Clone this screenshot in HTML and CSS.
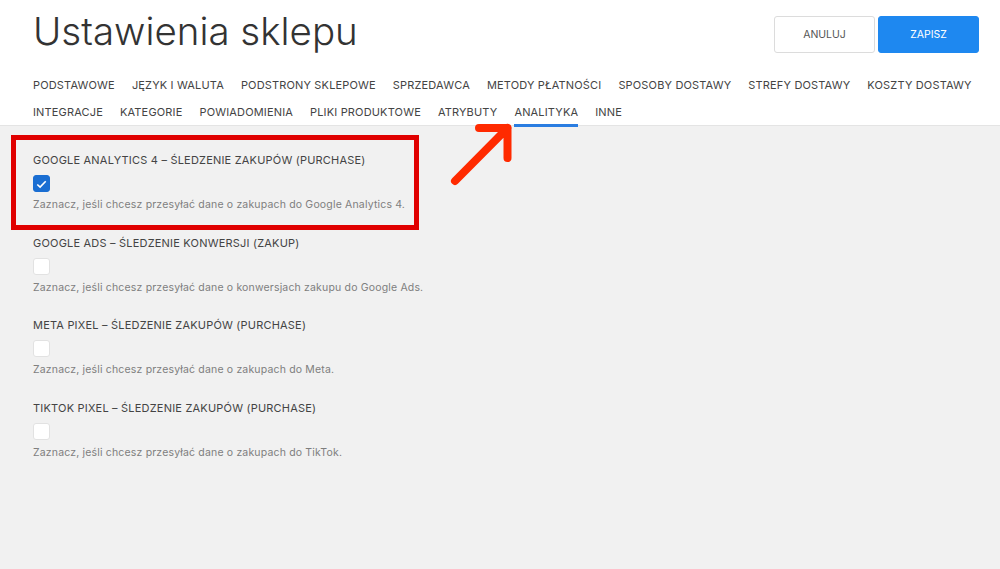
FILE: index.html
```html
<!DOCTYPE html>
<html lang="pl">
<head>
<meta charset="utf-8">
<title>Ustawienia sklepu</title>
<link rel="stylesheet" href="styles.css">
</head>
<body>
<header class="header">
  <div class="top">
    <h1 class="title">Ustawienia sklepu</h1>
    <div class="actions">
      <button class="btn btn-cancel">ANULUJ</button>
      <button class="btn btn-save">ZAPISZ</button>
    </div>
  </div>
  <nav class="tabs">
    <a class="tab">PODSTAWOWE</a>
    <a class="tab">JĘZYK I WALUTA</a>
    <a class="tab">PODSTRONY SKLEPOWE</a>
    <a class="tab">SPRZEDAWCA</a>
    <a class="tab">METODY PŁATNOŚCI</a>
    <a class="tab">SPOSOBY DOSTAWY</a>
    <a class="tab">STREFY DOSTAWY</a>
    <a class="tab">KOSZTY DOSTAWY</a>
    <a class="tab">INTEGRACJE</a>
    <a class="tab">KATEGORIE</a>
    <a class="tab">POWIADOMIENIA</a>
    <a class="tab">PLIKI PRODUKTOWE</a>
    <a class="tab">ATRYBUTY</a>
    <a class="tab active">ANALITYKA</a>
    <a class="tab">INNE</a>
  </nav>
</header>
<main class="content">
  <section class="field">
    <div class="label">GOOGLE ANALYTICS 4 – ŚLEDZENIE ZAKUPÓW (PURCHASE)</div>
    <span class="check checked">
      <svg viewBox="0 0 16 16" width="16" height="16"><path d="M3.5 8.5l3 2.8 6-6.3" fill="none" stroke="#fff" stroke-width="1.7"/></svg>
    </span>
    <p class="hint">Zaznacz, jeśli chcesz przesyłać dane o zakupach do Google Analytics 4.</p>
  </section>
  <section class="field">
    <div class="label">GOOGLE ADS – ŚLEDZENIE KONWERSJI (ZAKUP)</div>
    <span class="check"></span>
    <p class="hint">Zaznacz, jeśli chcesz przesyłać dane o konwersjach zakupu do Google Ads.</p>
  </section>
  <section class="field">
    <div class="label">META PIXEL – ŚLEDZENIE ZAKUPÓW (PURCHASE)</div>
    <span class="check"></span>
    <p class="hint">Zaznacz, jeśli chcesz przesyłać dane o zakupach do Meta.</p>
  </section>
  <section class="field">
    <div class="label">TIKTOK PIXEL – ŚLEDZENIE ZAKUPÓW (PURCHASE)</div>
    <span class="check"></span>
    <p class="hint">Zaznacz, jeśli chcesz przesyłać dane o zakupach do TikTok.</p>
  </section>
</main>
<div class="highlight"></div>
<svg class="arrow" viewBox="0 0 70 70" width="70" height="70">
  <path d="M7 59L59.5 6M31 6H59.5V36" fill="none" stroke="#ff2a00" stroke-width="8" stroke-linecap="round" stroke-linejoin="round"/>
</svg>
</body>
</html>
```
FILE: styles.css
```css
* { box-sizing: border-box; }
html, body { margin: 0; height: 100%; }
body {
  position: relative;
  overflow: hidden;
  background: #f1f1f1;
  font-family: Inter, "Liberation Sans", sans-serif;
  color: #444;
}
.header {
  height: 126px;
  background: #fff;
  border-bottom: 1px solid #e4e4e4;
  padding: 0 21px 0 33px;
}
.top {
  height: 66px;
  display: flex;
  justify-content: space-between;
  align-items: flex-start;
}
.title {
  margin: 7px 0 0;
  font-size: 38.5px;
  line-height: 48px;
  font-weight: 300;
  color: #333;
}
.actions { display: flex; gap: 3px; padding-top: 16px; }
.btn {
  width: 101px;
  height: 37px;
  border-radius: 3px;
  font-family: inherit;
  font-size: 10.5px;
  padding: 0;
}
.btn-cancel { background: #fff; border: 1px solid #dcdcdc; color: #555; }
.btn-save { background: #1e88f0; border: 1px solid #1e88f0; color: #fff; }
.tabs {
  display: flex;
  flex-wrap: wrap;
  column-gap: 17px;
  margin-top: 6px;
}
.tab {
  font-size: 11px;
  line-height: 27px;
  height: 27px;
  color: #444;
  letter-spacing: 0.16px;
}
.tab.active { box-shadow: inset 0 -3px 0 #2a7de1; height: 28px; margin-bottom: -1px; }
.content { padding: 27px 33px 0; }
.field { height: 82.5px; }
.label {
  font-size: 11px;
  line-height: 14px;
  color: #444;
  letter-spacing: 0.2px;
}
.check {
  display: flex;
  align-items: center;
  justify-content: center;
  width: 17px;
  height: 17px;
  margin-top: 8px;
  background: #fff;
  border: 1px solid #e2e2e2;
  border-radius: 3px;
}
.check.checked { background: #1a6ed2; border-color: #1a6ed2; }
.hint {
  margin: 5px 0 0;
  font-size: 10.5px;
  line-height: 15px;
  color: #7e7e7e;
  letter-spacing: 0.17px;
}
.highlight {
  position: absolute;
  left: 11px;
  top: 135px;
  width: 408px;
  height: 95px;
  border: 5px solid #e00000;
}
.arrow {
  position: absolute;
  left: 448px;
  top: 122px;
}
```
